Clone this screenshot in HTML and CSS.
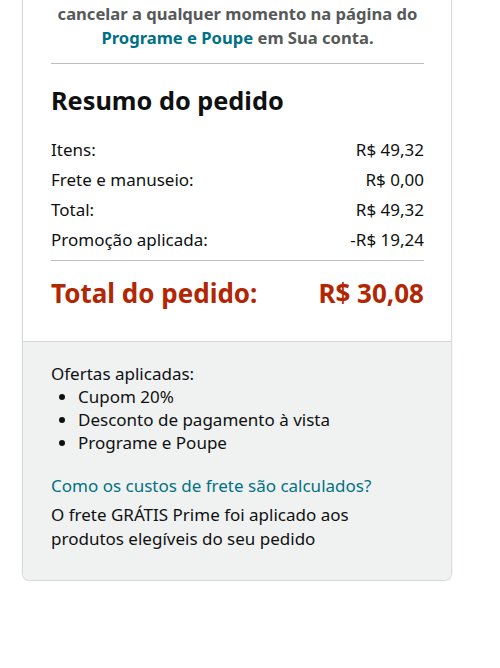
FILE: index.html
```html
<!DOCTYPE html>
<html lang="pt-BR">
<head>
    <meta charset="UTF-8">
    <meta name="viewport" content="width=device-width, initial-scale=1.0">
    <title>Resumo do pedido</title>
    <link rel="stylesheet" href="styles.css">
</head>
<body>
    <div class="resumo-box">
        <div class="resumo-main">
            <p class="aviso">cancelar a qualquer momento na página do <a href="#" class="link">Programe e Poupe</a> em Sua conta.</p>
            <hr class="divisor">
            <h2>Resumo do pedido</h2>
            <div class="linha"><span>Itens:</span><span>R$ 49,32</span></div>
            <div class="linha"><span>Frete e manuseio:</span><span>R$ 0,00</span></div>
            <div class="linha"><span>Total:</span><span>R$ 49,32</span></div>
            <div class="linha"><span>Promoção aplicada:</span><span>-R$ 19,24</span></div>
            <hr class="divisor divisor-total">
            <div class="linha total-pedido"><span>Total do pedido:</span><span>R$ 30,08</span></div>
        </div>
        <div class="resumo-ofertas">
            <p class="ofertas-titulo">Ofertas aplicadas:</p>
            <ul class="ofertas-lista">
                <li>Cupom 20%</li>
                <li>Desconto de pagamento à vista</li>
                <li>Programe e Poupe</li>
            </ul>
            <a href="#" class="link frete-link">Como os custos de frete são calculados?</a>
            <p class="frete-info">O frete GRÁTIS Prime foi aplicado aos produtos elegíveis do seu pedido</p>
        </div>
    </div>
</body>
</html>
```

FILE: styles.css
```css
body {
    font-family: "Noto Sans", Arial, sans-serif;
    margin: 0;
    padding: 0;
    background-color: white;
    color: #0f1111;
    font-size: 17px;
}
.resumo-box {
    width: 428px;
    margin: -12px 0 0 22px;
    border: 1px solid #d5d9d9;
    border-top: none;
    border-radius: 0 0 8px 8px;
    box-shadow: 0 1px 2px rgba(0,0,0,0.08);
    overflow: hidden;
}
.resumo-main {
    background-color: white;
    padding: 14px 27px 34px 28px;
}
.aviso {
    margin: 0;
    text-align: center;
    font-weight: bold;
    font-size: 16.6px;
    line-height: 24px;
    color: #565959;
}
.link {
    color: #007185;
    text-decoration: none;
}
.divisor {
    border: none;
    border-top: 1px solid #bbbfbf;
    margin: 13px 0 22px;
}
h2 {
    margin: 0 0 21px;
    font-size: 25.3px;
    line-height: 28px;
}
.linha {
    display: flex;
    justify-content: space-between;
    line-height: 20px;
    padding: 5px 0;
}
.divisor-total {
    margin: 5px 0 18px;
}
.total-pedido {
    color: #b12704;
    font-weight: bold;
    font-size: 26px;
    line-height: 28px;
    padding: 0;
}
.resumo-ofertas {
    background-color: #f0f2f2;
    border-top: 1px solid #d5d9d9;
    padding: 20px 27px 29px 28px;
    line-height: 23px;
}
.ofertas-titulo {
    margin: 0;
}
.ofertas-lista {
    margin: 0 0 20px;
    padding-left: 27px;
}
.frete-link {
    display: block;
    margin-bottom: 6px;
}
.frete-info {
    margin: 0;
    line-height: 24px;
}
```
